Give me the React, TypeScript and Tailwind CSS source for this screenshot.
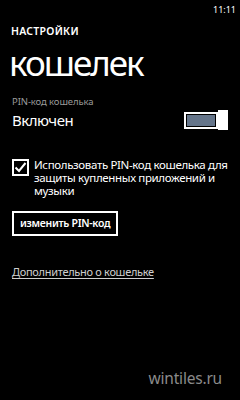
export default function App() {
  return (
    <div
      className="w-[240px] h-[400px] bg-black text-white flex flex-col overflow-hidden"
      style={{ fontFamily: '"Noto Sans", "Open Sans", sans-serif' }}
    >
      {/* status bar */}
      <div className="h-[16px] flex justify-end items-center pr-[4px] text-[9px] leading-none pt-[2px]">
        11:11
      </div>

      <div className="pl-[11px] mt-[10px] text-[10.5px] font-semibold leading-none tracking-wide">
        НАСТРОЙКИ
      </div>
      <div className="pl-[9px] mt-[8px] text-[35px] leading-[36px] font-normal tracking-[-2px]">
        кошелек
      </div>

      {/* toggle */}
      <div className="pl-[12px] pr-[12px] mt-[16px]">
        <div className="text-[9.5px] leading-none text-[#9a9a9a] tracking-[-0.1px]">PIN-код кошелька</div>
        <div className="flex items-center justify-between mt-[4px]">
          <span className="text-[15px] leading-none tracking-[-0.5px]">Включен</span>
          <div className="flex items-center">
            <div className="w-[34px] h-[17px] border-[2px] border-white p-[1px]">
              <div className="w-full h-full bg-[#65758a]" />
            </div>
            <div className="w-[10px] h-[20px] bg-white" />
          </div>
        </div>
      </div>

      {/* checkbox */}
      <div className="flex items-start pl-[12px] pr-[6px] mt-[28px] gap-[5px]">
        <div className="w-[17px] h-[17px] border-[2px] border-white shrink-0 flex items-center justify-center mt-[1px]">
          <svg width="13" height="13" viewBox="0 0 13 13">
            <path d="M1.5 6.5 L5 10 L11.5 2" fill="none" stroke="white" strokeWidth="2" />
          </svg>
        </div>
        <div className="text-[11.5px] leading-[13px] tracking-[-0.35px]">
          Использовать PIN-код кошелька для защиты купленных приложений и музыки
        </div>
      </div>

      {/* button */}
      <div className="pl-[12px] mt-[12px]">
        <div className="inline-flex items-center h-[25px] px-[6px] border-[2px] border-white text-[10.5px] font-semibold leading-none tracking-[-0.3px]">
          изменить PIN-код
        </div>
      </div>

      <div className="pl-[12px] mt-[30px] text-[11px] leading-none text-[#cfcfcf] underline underline-offset-[2px] tracking-[-0.3px]">
        Дополнительно о кошельке
      </div>

      <div className="flex-1" />
      <div className="flex justify-end pr-[18px] pb-[14px] text-[15.5px] leading-none text-[#8a8a8a] tracking-[-0.2px]">
        wintiles.ru
      </div>
    </div>
  );
}
